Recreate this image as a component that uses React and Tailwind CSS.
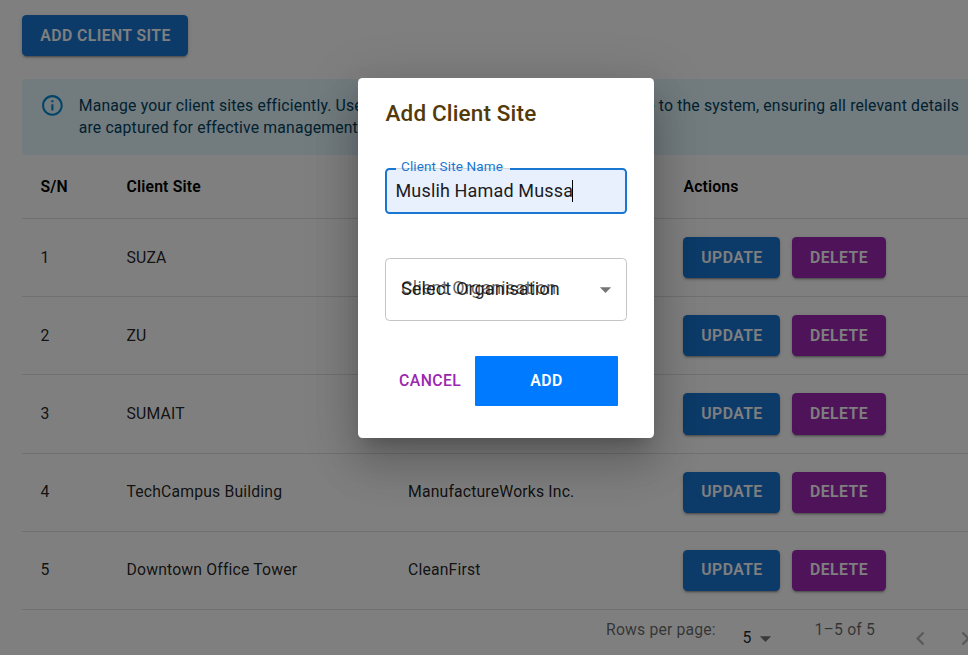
const rows = [
  { id: 1, site: 'SUZA', org: '' },
  { id: 2, site: 'ZU', org: '' },
  { id: 3, site: 'SUMAIT', org: '' },
  { id: 4, site: 'TechCampus Building', org: 'ManufactureWorks Inc.' },
  { id: 5, site: 'Downtown Office Tower', org: 'CleanFirst' },
];

const raised =
  'shadow-[0px_3px_1px_-2px_rgba(0,0,0,0.2),0px_2px_2px_0px_rgba(0,0,0,0.14),0px_1px_5px_0px_rgba(0,0,0,0.12)]';

function Button({ className, children }) {
  return (
    <button
      className={`flex h-[41.3px] shrink-0 items-center justify-center rounded-[4.5px] text-[15.75px] font-semibold tracking-[0.45px] text-white ${raised} ${className}`}
    >
      {children}
    </button>
  );
}

function Arrow({ className }) {
  return (
    <svg viewBox="0 0 24 24" className={className} fill="currentColor">
      <path d="M7 10l5 5 5-5z" />
    </svg>
  );
}

function Dialog() {
  return (
    <div className="absolute inset-0 bg-black/50 pt-[78px] pl-[358px]">
      <div className="flex h-[360px] w-[296px] flex-col rounded-[4.5px] bg-white shadow-[0px_12px_17px_-8px_rgba(0,0,0,0.2),0px_27px_43px_3px_rgba(0,0,0,0.14),0px_10px_52px_9px_rgba(0,0,0,0.12)]">
        <h2 className="mt-[17px] ml-[27.5px] h-9 text-[22.5px] leading-9 font-medium tracking-[0.15px] text-[#533a0b]">
          Add Client Site
        </h2>
        <div className="relative mt-[37px] ml-[27px] flex h-[46px] w-[242px] items-center rounded-[4.5px] border-2 border-[#1976d2] bg-[#e8f0fe] pl-[8.5px]">
          <span className="pb-[2px] text-[18px] tracking-[0.15px] text-[#1c1c1e]">Muslih Hamad Mussa</span>
          <span className="-ml-px h-[22px] w-px bg-black" />
          <span className="absolute -top-[2px] left-[9px] h-[2px] w-[114px] bg-[#e8f0fe]" />
          <span className="absolute -top-[2px] left-[9px] h-px w-[114px] bg-[#d4d6da]" />
          <label className="absolute -top-[13.4px] left-[13.5px] origin-top-left scale-75 text-[18px] leading-[26px] tracking-[0.17px] whitespace-nowrap text-[#1976d2]">
            Client Site Name
          </label>
        </div>
        <div className="relative mt-[44px] ml-[27px] flex h-[63px] w-[242px] items-center justify-between rounded-[4.5px] border border-[#c4c4c4] pr-[7px] pl-[15px]">
          <span className="pb-[2px] text-[18px] tracking-[0.15px] text-black/87">Select Organisation</span>
          <label className="absolute top-[16px] left-[15px] text-[18px] leading-[26px] tracking-[0.15px] whitespace-nowrap text-black/60">
            Client Organisation
          </label>
          <Arrow className="size-[27px] text-black/54" />
        </div>
        <div className="mt-[35px] ml-[41px] flex h-[50px] items-center">
          <button className="w-[62px] text-[15.75px] font-medium tracking-[0.45px] text-[#9c27b0]">CANCEL</button>
          <button className="ml-[14px] h-[50px] w-[143px] rounded-[1px] bg-[#007bff] text-[15.75px] font-semibold tracking-[0.45px] text-white">
            ADD
          </button>
        </div>
      </div>
    </div>
  );
}

export default function App() {
  return (
    <div className="relative h-[655px] w-[968px] overflow-hidden bg-white font-[Roboto,sans-serif] text-[15.75px] tracking-[0.17px] text-black/87">
      <div className="w-[1000px] pt-[15px] pl-[22px]">
        <Button className="w-[166px] bg-[#1976d2] pl-px">ADD CLIENT SITE</Button>
        <div className="mt-[22.7px] flex h-[76px] rounded-[4.5px] bg-[#e5f6fd] pl-[18px] text-[#014361]">
          <svg viewBox="0 0 24 24" className="mt-[14px] size-[24.75px] shrink-0 text-[#0288d1]" fill="currentColor">
            <path d="M11 7h2v2h-2zm0 4h2v6h-2zm1-9C6.48 2 2 6.48 2 12s4.48 10 10 10 10-4.48 10-10S17.52 2 12 2zm0 18c-4.41 0-8-3.59-8-8s3.59-8 8-8 8 3.59 8 8-3.59 8-8 8z" />
          </svg>
          <div className="mt-[16px] ml-[14px] leading-[22px] whitespace-nowrap">
            <div className="flex">
              <span className="mr-[4px] flex w-[576px] justify-between">
                <span>Manage your client sites efficiently. Use</span>
                <span>the form below to add a new one</span>
              </span>
              <span>to the system, ensuring all relevant details</span>
            </div>
            <div>are captured for effective management.</div>
          </div>
        </div>
        <div className="grid h-[64px] grid-cols-[86px_281.5px_275px_1fr] items-center border-b border-[#e0e0e0] pl-[18.5px] font-semibold text-black">
          <span>S/N</span>
          <span>Client Site</span>
          <span />
          <span className="pl-[0.5px]">Actions</span>
        </div>
        {rows.map((r) => (
          <div
            key={r.id}
            className="grid h-[78.22px] grid-cols-[86px_281.5px_275px_1fr] items-center border-b border-[#e0e0e0] pl-[18.5px] leading-[23px]"
          >
            <span className="pb-[1.1px]">{r.id}</span>
            <span className="pb-[1.1px]">{r.site}</span>
            <span className="pb-[1.1px]">{r.org}</span>
            <div className="flex gap-3">
              <Button className="w-[97px] bg-[#1976d2] pb-[1.1px] pl-px leading-[23px]">UPDATE</Button>
              <Button className="w-[94px] bg-[#9c27b0] pb-[1.1px] leading-[23px]">DELETE</Button>
            </div>
          </div>
        ))}
        <div className="flex pl-[584px] text-black/60">
          <span className="mt-[9px] w-[136.5px] leading-[22px]">Rows per page:</span>
          <span className="mt-[17px] leading-[22px] text-black/87">5</span>
          <Arrow className="mt-[15px] ml-[0.5px] size-[27px] text-black/54" />
          <span className="mt-[9px] ml-[35.5px] w-[92px] leading-[22px]">1–5 of 5</span>
          <svg viewBox="0 0 24 24" className="mt-[14.5px] size-[27px] text-black/30" fill="currentColor">
            <path d="M15.41 16.59L10.83 12l4.58-4.59L14 6l-6 6 6 6z" />
          </svg>
          <svg viewBox="0 0 24 24" className="mt-[14.5px] ml-[18px] size-[27px] text-black/30" fill="currentColor">
            <path d="M8.59 16.59L13.17 12 8.59 7.41 10 6l6 6-6 6z" />
          </svg>
        </div>
      </div>
      <Dialog />
    </div>
  );
}
